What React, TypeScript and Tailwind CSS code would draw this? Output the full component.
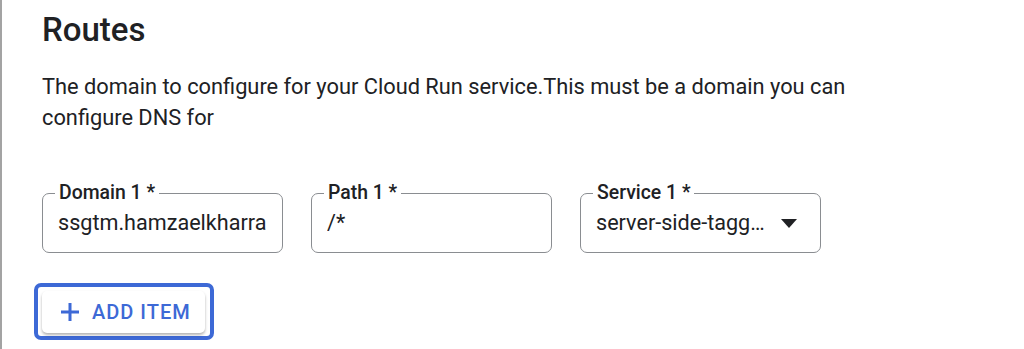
import React from "react";

type FieldProps = {
  label: string;
  value: string;
  select?: boolean;
};

const Field: React.FC<FieldProps> = ({ label, value, select }) => {
  return (
    <div
      className={
        select
          ? "relative w-[241px] h-[60px] rounded-[7px] border border-[#8a8d91] flex items-center pl-[15px] pr-[23px]"
          : "relative w-[241px] h-[60px] rounded-[7px] border border-[#8a8d91] flex items-center pl-[15px] pr-[8px]"
      }
    >
      <span className="absolute -top-[14px] left-[12px] bg-white px-[4px] text-[19.4px] leading-[26px] font-medium text-[#202124]">
        {label}
      </span>
      <span className="flex-1 text-[21.6px] text-[#202124] whitespace-nowrap overflow-hidden">{value}</span>
      {select && (
        <svg width="16" height="9" viewBox="0 0 16 9" className="ml-2 shrink-0">
          <path d="M0 0 L16 0 L8 9 Z" fill="#202124" />
        </svg>
      )}
    </div>
  );
};

export default function App() {
  return (
    <div
      className="w-[1024px] h-[349px] bg-white border-l-2 border-[#a3a3a3] pl-[40px] pt-[10px] overflow-hidden"
      style={{ fontFamily: "Roboto, 'Liberation Sans', sans-serif" }}
    >
      <h2 className="text-[33px] leading-[40px] font-medium text-[#202124]">Routes</h2>
      <p className="mt-[21px] text-[21.8px] leading-[31px] text-[#202124] w-[830px]">
        The domain to configure for your Cloud Run service.This must be a domain you can configure DNS for
      </p>

      <div className="mt-[60px] flex gap-[28px]">
        <Field label="Domain 1 *" value="ssgtm.hamzaelkharra" />
        <Field label="Path 1 *" value="/*" />
        <Field label="Service 1 *" value="server-side-tagg…" select />
      </div>

      <div className="mt-[30px] -ml-[8px] inline-flex rounded-[7px] border-4 border-[#3d69d6] p-[4px] pr-[5px] pb-[3px]">
        <button className="flex items-center gap-[12px] h-[42px] pl-[18px] pr-[14px] rounded-[5px] bg-white shadow-[0_2px_3px_rgba(0,0,0,0.3)] text-[#3d69d6] text-[20px] font-medium tracking-[0.05em]">
          <svg width="20" height="20" viewBox="0 0 20 20">
            <path d="M10 1 V19 M1 10 H19" stroke="#3d69d6" strokeWidth="3" />
          </svg>
          ADD ITEM
        </button>
      </div>
    </div>
  );
}
